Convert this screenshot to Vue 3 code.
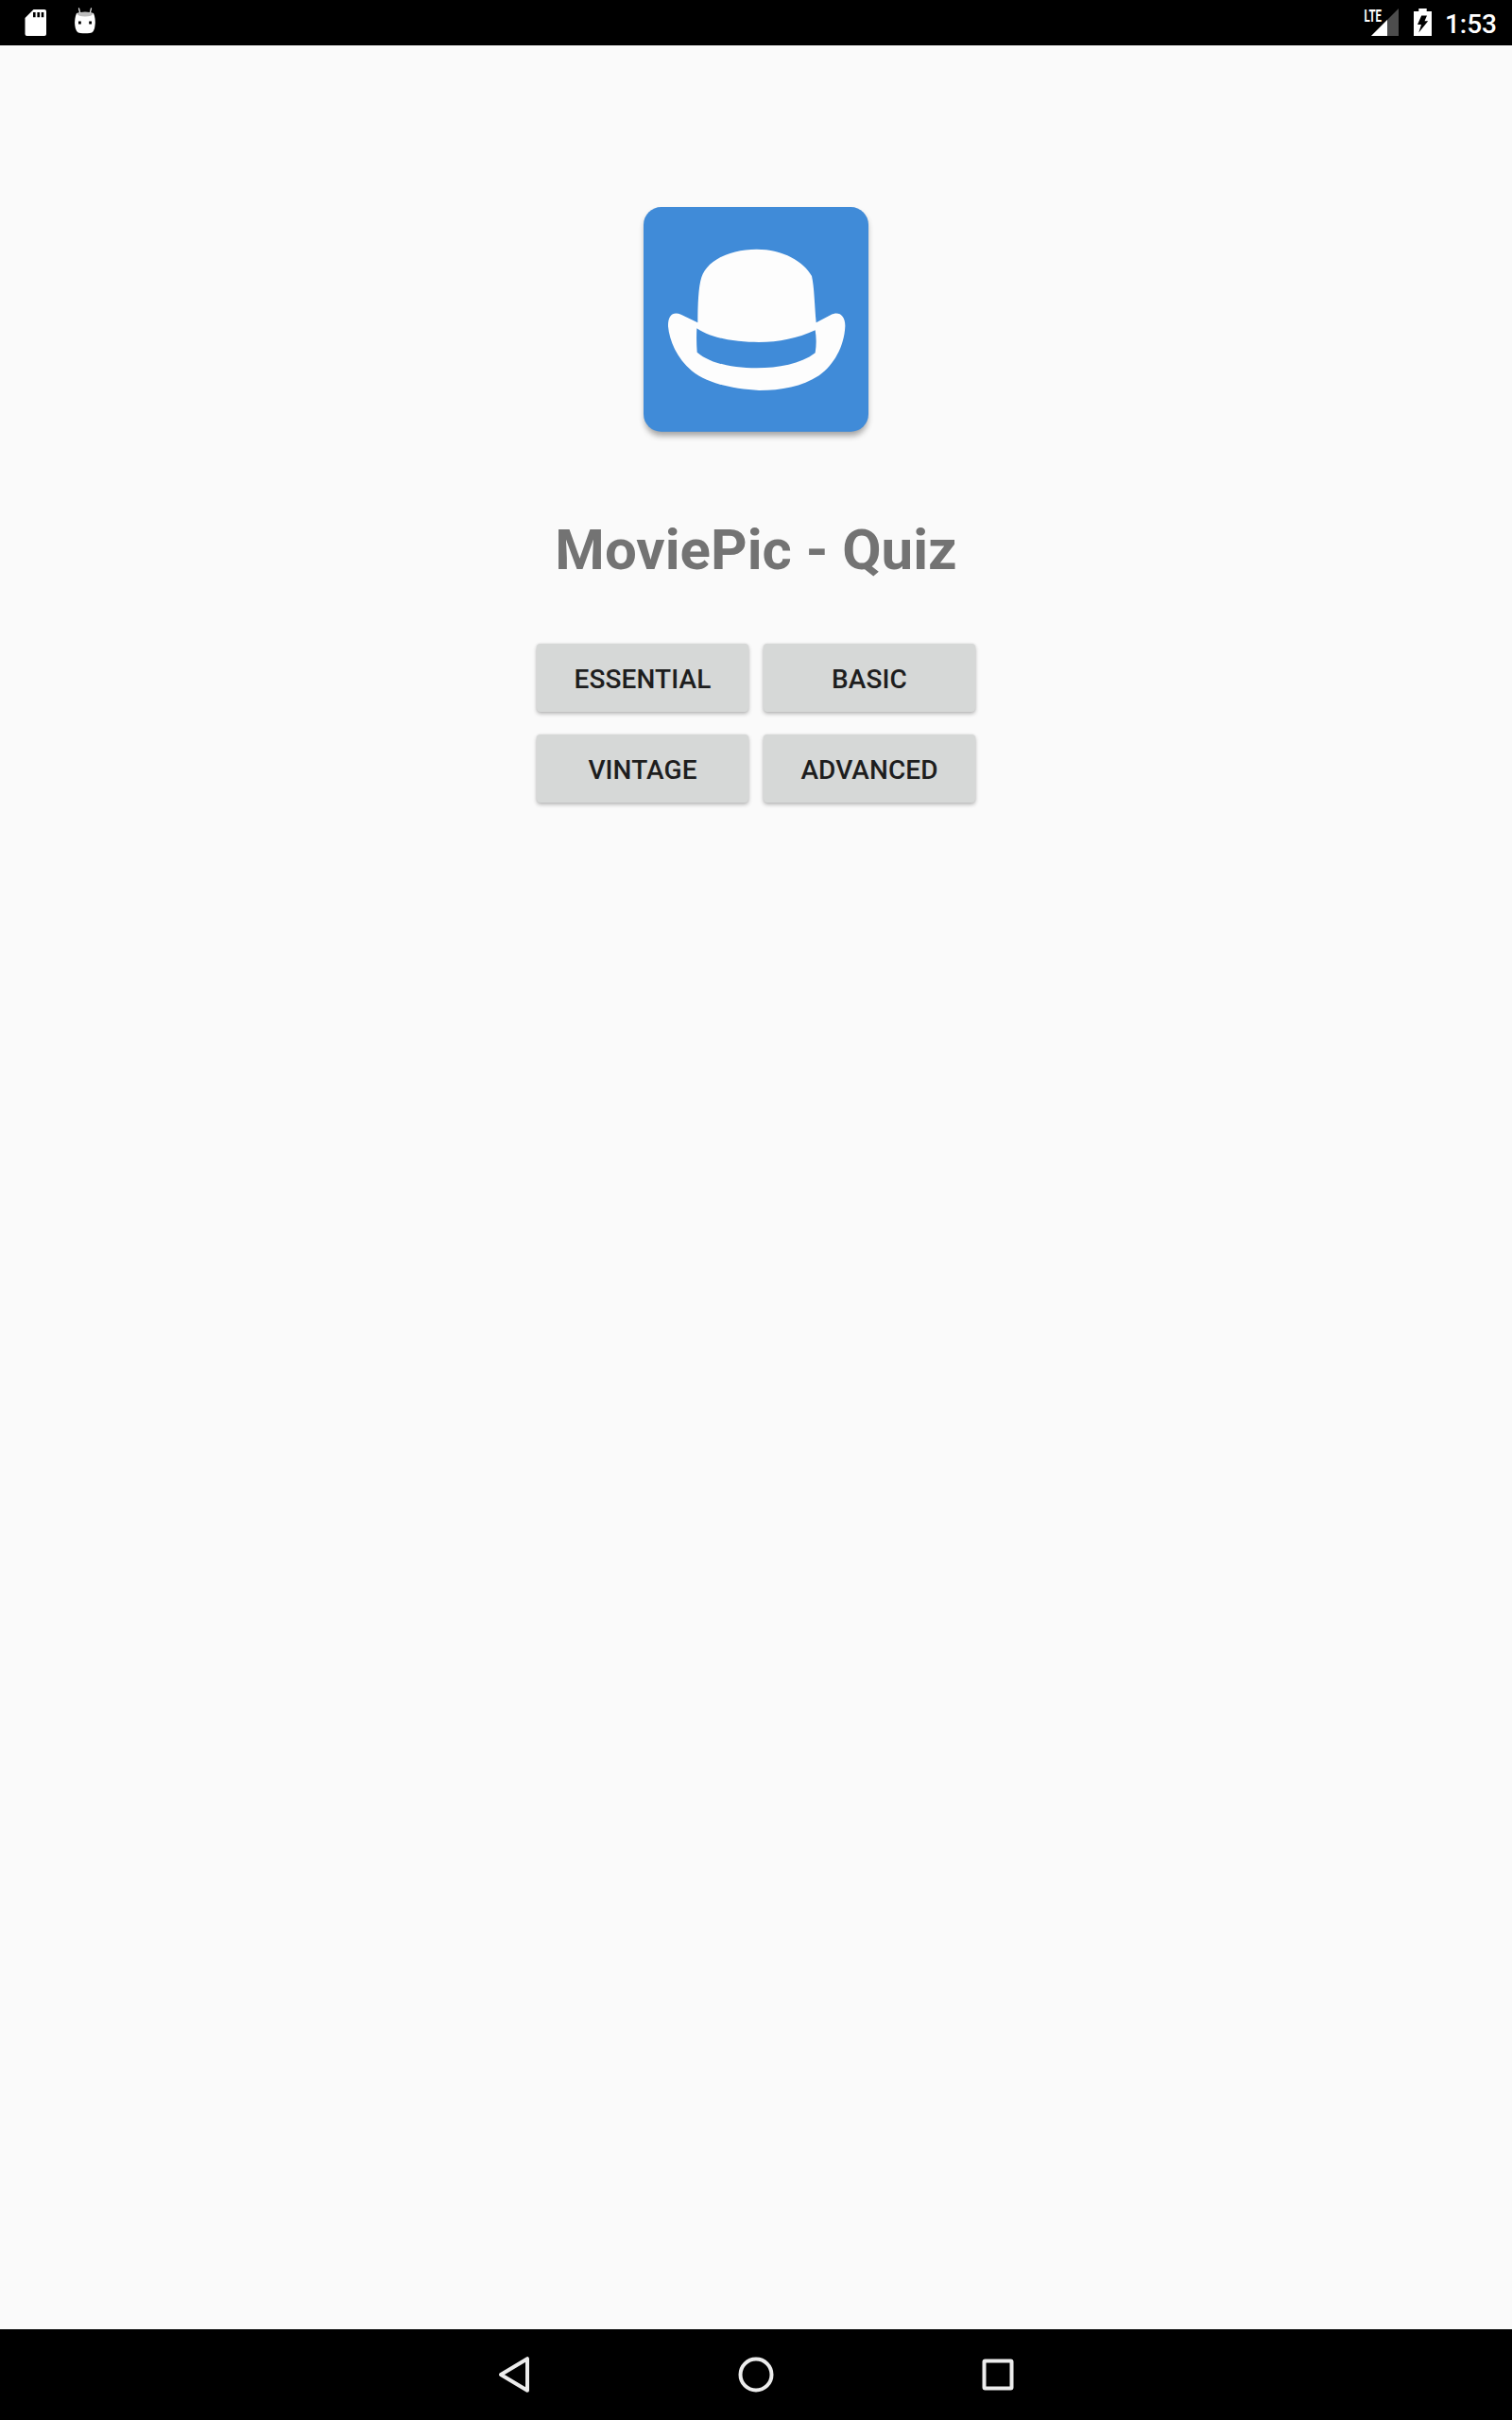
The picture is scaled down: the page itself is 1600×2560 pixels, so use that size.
<script setup>
const levels = ['Essential', 'Basic', 'Vintage', 'Advanced']
</script>

<template>
  <div class="screen">
    <header class="status">
      <div class="notifications">
        <svg class="sd" width="24" height="30" viewBox="0 0 24 30">
          <path fill="#fff" d="M9.500 1H21q2 0 2 2v24q0 2-2 2H2.500q-2 0-2-2V10z" />
          <path fill="#000" d="M9 4h2.600v5.300H9zM13.400 4H16v5.300h-2.600zM17.700 4h2.600v5.300h-2.600z" />
        </svg>
        <svg class="droid" width="24" height="30" viewBox="0 0 24 30">
          <path stroke="#ddd" stroke-width="1.300" stroke-linecap="round" fill="none" d="M5.500 1l1.300 5M18.500 1l-1.300 5" />
          <path fill="#fff" d="M3 6Q12 3.500 21 6Q23.500 12 22.500 19Q22 26.700 17 27Q12 27.700 7 27Q2 26.700 1.300 19Q.5 12 3 6z" />
          <path fill="#bdbdbd" d="M3.300 6.200Q12 3.300 20.700 6.200Q19.500 9.500 12 9.500T3.300 6.200z" />
          <path fill="#000" d="M5 14.500h2.800v3H5zM16.200 14.500H19v3h-2.800z" />
        </svg>
      </div>
      <div class="system">
        <svg class="signal" width="40" height="48" viewBox="-2 0 40 48">
          <path fill="#4d4d4d" d="M36 9v29H7z" />
          <path fill="#fff" d="M24 21V38H7z" />
          <text class="network" x="-.5" y="22.700" textLength="18.500" lengthAdjust="spacingAndGlyphs">LTE</text>
        </svg>
        <svg class="battery" width="19" height="29" viewBox="0 0 19 29">
          <path fill="#fff" d="M5.300 0h8.400v3H19v26H0V3h5.300z" />
          <path fill="#000" d="M8.200 7.500H14l-2.500 5.700h3.700L5.300 25.500 8 17H4z" />
        </svg>
        <span class="clock">1:53</span>
      </div>
    </header>

    <main class="content">
      <svg class="logo" width="280" height="280" viewBox="0 0 840 840">
        <defs>
          <filter id="soft" x="-10%" y="-10%" width="120%" height="120%">
            <feGaussianBlur stdDeviation="10" />
          </filter>
          <filter id="edge"><feGaussianBlur stdDeviation="2.200" /></filter>
        </defs>
        <rect x="67" y="72" width="707" height="711" rx="52" fill="#000" opacity=".34" filter="url(#soft)" />
        <g filter="url(#edge)">
          <rect x="63" y="57" width="714" height="713" rx="56" fill="#408bd8" />
          <path fill="#fdfdfd" d="M235 424C235 370 237 310 247 280C264 226 338 191 422 191C506 191 572 230 597 276C605 310 606 370 611 424L658 399C683 386 704 401 703 436C700 500 667 559 620 592C565 628 501 639 430 639C357 635 269 620 216 577C169 537 145 481 141 436C140 400 157 387 182 398z" />
          <path fill="#408bd8" d="M232 442C282 477 366 486 429 486C493 486 551 474 608 448Q614 484 608 520C561 556 491 568 422 568C350 568 276 555 233 518Q230 480 232 442z" />
        </g>
      </svg>
      <h1>MoviePic - Quiz</h1>
      <div class="levels">
        <button v-for="level in levels" :key="level" type="button">{{ level }}</button>
      </div>
    </main>

    <nav class="navbar">
      <svg width="48" height="48" viewBox="0 0 48 48">
        <path d="M38 7.200v33.600L10 24z" />
      </svg>
      <svg width="48" height="48" viewBox="0 0 48 48">
        <circle cx="24" cy="24" r="16.500" />
      </svg>
      <svg width="48" height="48" viewBox="0 0 48 48">
        <rect x="9.500" y="9.500" width="29" height="29" rx="1" />
      </svg>
    </nav>
  </div>
</template>

<style>
body {
  margin: 0;
}
</style>

<style scoped>
.screen {
  display: flex;
  flex-direction: column;
  width: 1600px;
  height: 2560px;
  background: #fafafa;
  font-family: Roboto, sans-serif;
}

.status {
  display: flex;
  justify-content: space-between;
  height: 48px;
  background: #000;
}

.notifications,
.system {
  display: flex;
  align-items: flex-start;
}

.notifications {
  gap: 28px;
  padding: 9px 0 0 26px;
}

.droid {
  margin-top: -1px;
}

.system {
  padding-right: 16px;
}

.signal {
  margin-right: 14px;
}

.network {
  fill: #fff;
  font-size: 17.800px;
  font-weight: 700;
}

.battery {
  margin: 9px 14px 0 0;
}

.clock {
  margin-top: 9px;
  color: #fff;
  font-size: 28px;
  font-weight: 500;
  line-height: 33px;
}

.content {
  display: flex;
  flex: 1;
  flex-direction: column;
  align-items: center;
  padding-top: 152px;
}

.logo {
  flex: none;
}

h1 {
  margin: 66px 0 0;
  color: #737373;
  font-size: 60px;
  font-weight: 700;
  line-height: 71px;
}

.levels {
  display: grid;
  grid-template-columns: repeat(2, 224px);
  gap: 24px 16px;
  margin-top: 64px;
}

button {
  height: 72px;
  padding: 3px 0 0;
  border: 0;
  border-radius: 4px;
  background: #d6d8d7;
  box-shadow: 0 2px 4px rgb(0 0 0 / 28%), 0 0 2px rgb(0 0 0 / 10%);
  color: #1e1e1e;
  font: 500 28px/69px Roboto, sans-serif;
  letter-spacing: 0.1px;
  text-transform: uppercase;
}

.navbar {
  display: flex;
  align-items: center;
  justify-content: center;
  gap: 208px;
  height: 96px;
  background: #000;
}

.navbar svg {
  fill: none;
  stroke: #ececec;
  stroke-width: 4;
  stroke-linejoin: round;
}
</style>
